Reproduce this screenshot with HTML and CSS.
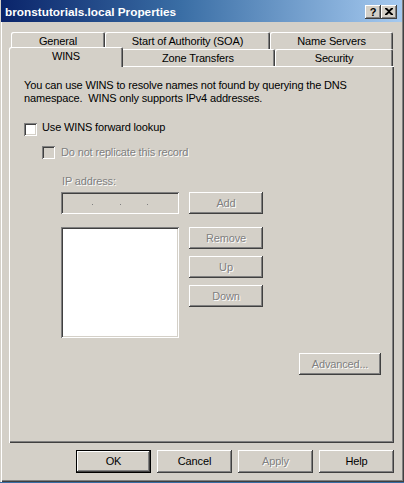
FILE: index.html
```html
<!DOCTYPE html>
<html>
<head>
<meta charset="utf-8">
<link rel="stylesheet" href="styles.css">
</head>
<body>
<div class="window">
  <div class="titlebar">
    <span class="title">bronstutorials.local Properties</span>
    <div class="tbtns">
      <span class="tbtn help">?</span>
      <span class="tbtn close">
        <svg width="8" height="7" viewBox="0 0 8 7"><path d="M0 0h2l2 2 2-2h2v1L5 3.5 8 6v1H6L4 5 2 7H0V6l3-2.5L0 1z" fill="#000"/></svg>
      </span>
    </div>
  </div>
  <div class="body">
    <div class="tabs">
      <div class="tabrow">
        <div class="tab w-general">General</div>
        <div class="tab w-soa">Start of Authority (SOA)</div>
        <div class="tab w-ns">Name Servers</div>
      </div>
      <div class="tabrow">
        <div class="tab w-wins selected">WINS</div>
        <div class="tab w-zt">Zone Transfers</div>
        <div class="tab w-sec">Security</div>
      </div>
    </div>
    <div class="panel">
      <p class="desc">You can use WINS to resolve names not found by querying the DNS namespace.&nbsp; WINS only supports IPv4 addresses.</p>
      <label class="check">
        <span class="box"></span>
        <span class="lbl">Use WINS forward lookup</span>
      </label>
      <label class="check sub disabled">
        <span class="box"></span>
        <span class="dis">Do not replicate this record</span>
      </label>
      <div class="iplabel dis">IP address:</div>
      <div class="ipgrid">
        <div class="field ipfield">
          <span></span><span class="dot"></span><span></span><span class="dot"></span><span></span><span class="dot"></span><span></span>
        </div>
        <div class="btn dbtn"><span class="dis">Add</span></div>
        <div class="field listbox"></div>
        <div class="btncol">
          <div class="btn dbtn"><span class="dis">Remove</span></div>
          <div class="btn dbtn"><span class="dis">Up</span></div>
          <div class="btn dbtn"><span class="dis">Down</span></div>
        </div>
      </div>
      <div class="advrow">
        <div class="btn dbtn adv"><span class="dis">Advanced...</span></div>
      </div>
    </div>
    <div class="actions">
      <div class="btn default">OK</div>
      <div class="btn">Cancel</div>
      <div class="btn"><span class="dis">Apply</span></div>
      <div class="btn">Help</div>
    </div>
  </div>
</div>
</body>
</html>
```
FILE: styles.css
```css
* { box-sizing: border-box; }
html, body { margin: 0; padding: 0; }
body {
  width: 404px;
  height: 483px;
  background: #3a6ea5;
  font-family: "Liberation Sans", Arial, sans-serif;
  font-size: 11px;
  letter-spacing: -0.15px;
  color: #000;
  overflow: hidden;
}
.window {
  width: 404px;
  height: 482px;
  background: #d4d0c8;
  box-shadow: inset 1px 0 #d4d0c8, inset 2px 0 #fff, inset -1px -1px #404040, inset -2px -2px #808080;
  display: flex;
  flex-direction: column;
}
.titlebar {
  height: 22px;
  margin: 0 2px 0 1px;
  background: linear-gradient(to right, #0a246a 0%, #3a6ea5 45%, #a6caf0 100%);
  display: flex;
  align-items: center;
  justify-content: space-between;
  padding: 0 5px 0 4px;
}
.title {
  color: #fff;
  font-weight: bold;
  font-size: 11.8px;
  letter-spacing: 0;
  line-height: 14px;
  padding-top: 1px;
}
.tbtns { display: flex; padding-top: 1px; }
.tbtn {
  width: 16px;
  height: 14px;
  background: #d4d0c8;
  box-shadow: inset -1px -1px #404040, inset 1px 1px #fff, inset -2px -2px #808080;
  display: flex;
  align-items: center;
  justify-content: center;
  font-weight: bold;
  font-size: 11px;
  line-height: 12px;
}
.tbtn.close svg { margin-left: -1px; }
.body {
  flex: 1;
  display: flex;
  flex-direction: column;
  padding: 10px 10px 0 9px;
}
.tabs {
  height: 34px;
  display: flex;
  flex-direction: column;
  padding-left: 2px;
}
.tabrow {
  display: flex;
  height: 17px;
}
.tab {
  height: 17px;
  text-align: center;
  line-height: 13px;
  padding-top: 3px;
  border-radius: 2px 2px 0 0;
  box-shadow: inset 1px 1px #fff, inset -1px 0 #404040, inset -2px 0 #808080;
  white-space: nowrap;
}
.w-general { width: 94px; }
.w-soa { width: 165px; }
.w-ns { width: 123px; }
.w-wins { width: 110px; }
.w-zt { width: 154px; }
.w-sec { width: 118px; }
.tab.selected {
  position: relative;
  z-index: 2;
  width: 114px;
  height: 20px;
  margin: -2px -2px 0 -2px;
  padding-top: 3px;
  background: #d4d0c8;
}
.panel {
  height: 377px;
  display: flex;
  flex-direction: column;
  padding: 13px 13px 0 15px;
  box-shadow: inset 1px 1px #fff, inset -1px -1px #404040, inset -2px -2px #808080;
}
.desc {
  margin: 0;
  line-height: 13px;
  width: 345px;
}
.check {
  display: flex;
  align-items: flex-start;
  gap: 5px;
  height: 13px;
  margin-top: 18px;
  line-height: 13px;
}
.check .lbl { margin-top: -2px; }
.check.sub { margin-left: 18px; margin-top: 10px; gap: 6px; }
.check.sub .dis { margin-top: 0; }
.box {
  width: 13px;
  height: 13px;
  flex: none;
  background: #fff;
  box-shadow: inset 1px 1px #808080, inset -1px -1px #fff, inset 2px 2px #404040, inset -2px -2px #d4d0c8;
}
.disabled .box { background: #d4d0c8; }
.dis {
  color: #808080;
  text-shadow: 1px 1px 0 #fff;
}
.iplabel {
  margin: 16px 0 0 38px;
  line-height: 13px;
}
.ipgrid {
  margin: 4px 0 0 37px;
  display: grid;
  grid-template-columns: 118px 74px;
  grid-template-rows: 22px 111px;
  column-gap: 10px;
  row-gap: 13px;
}
.field {
  box-shadow: inset 1px 1px #808080, inset -1px -1px #fff, inset 2px 2px #404040, inset -2px -2px #d4d0c8;
}
.ipfield {
  display: flex;
  align-items: center;
  padding: 0 4px;
}
.ipfield span { flex: 1; }
.ipfield .dot {
  flex: none;
  width: 1px;
  height: 1px;
  background: #808080;
  margin-top: 3px;
}
.listbox { background: #fff; }
.btncol {
  display: flex;
  flex-direction: column;
  gap: 7px;
}
.btn {
  height: 22px;
  display: flex;
  align-items: center;
  justify-content: center;
  background: #d4d0c8;
  box-shadow: inset -1px -1px #404040, inset 1px 1px #fff, inset -2px -2px #808080;
  line-height: 13px;
}
.advrow {
  display: flex;
  justify-content: flex-end;
  margin-top: 15px;
}
.adv { width: 82px; }
.actions {
  display: flex;
  justify-content: flex-end;
  gap: 6px;
  margin-top: 7px;
}
.actions .btn { width: 75px; height: 23px; }
.actions .btn.default {
  box-shadow: inset 0 0 0 1px #000, inset -2px -2px #404040, inset 2px 2px #fff, inset -3px -3px #808080;
}
```
